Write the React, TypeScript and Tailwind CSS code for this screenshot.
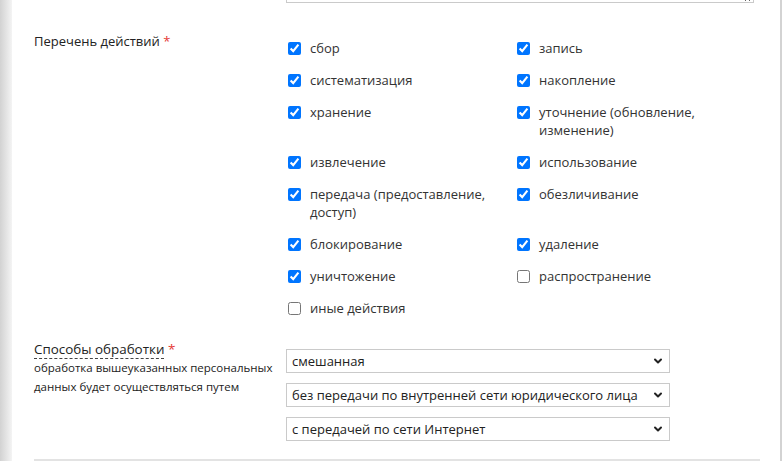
import { ChevronDown } from 'lucide-react';

type Action = { label: string; checked: boolean };

const ACTIONS: Action[] = [
  { label: 'сбор', checked: true },
  { label: 'запись', checked: true },
  { label: 'систематизация', checked: true },
  { label: 'накопление', checked: true },
  { label: 'хранение', checked: true },
  { label: 'уточнение (обновление, изменение)', checked: true },
  { label: 'извлечение', checked: true },
  { label: 'использование', checked: true },
  { label: 'передача (предоставление, доступ)', checked: true },
  { label: 'обезличивание', checked: true },
  { label: 'блокирование', checked: true },
  { label: 'удаление', checked: true },
  { label: 'уничтожение', checked: true },
  { label: 'распространение', checked: false },
  { label: 'иные действия', checked: false },
];

const METHODS = [
  ['смешанная', 'автоматизированная', 'неавтоматизированная'],
  ['без передачи по внутренней сети юридического лица', 'с передачей по внутренней сети юридического лица'],
  ['с передачей по сети Интернет', 'без передачи по сети Интернет'],
];

function Select({ options }: { options: string[] }) {
  return (
    <div className="relative w-[384px]">
      <select
        defaultValue={options[0]}
        className="block h-[24px] w-full appearance-none border border-[#cacaca] bg-white pl-[5px] pr-6 text-[13px] leading-[22px] text-[#222] outline-none"
      >
        {options.map((o) => (
          <option key={o}>{o}</option>
        ))}
      </select>
      <ChevronDown
        className="pointer-events-none absolute right-[6px] top-[6px] h-[12px] w-[12px] text-[#222]"
        strokeWidth={4}
      />
    </div>
  );
}

export default function App() {
  return (
    <div className="flex min-h-[461px] overflow-hidden bg-white font-['Open_Sans',sans-serif] text-[13px] text-[#333]">
      <div className="w-3 shrink-0 bg-gradient-to-r from-[#d2d2d2] to-[#f4f4f4]" />

      <div className="flex-1 pl-[22px]">
        {/* textarea from the section above, scrolled out of view */}
        <div className="grid grid-cols-[252px_1fr]">
          <textarea className="col-start-2 -mt-[57px] block h-[60px] w-[468px] border border-[#cacaca] bg-white" />
        </div>

        <div className="mt-[29px] grid grid-cols-[252px_1fr]">
          <p className="leading-[18px] text-[#222]">
            Перечень действий <span className="text-[#e53935]">*</span>
          </p>
          <div className="grid grid-cols-[229px_229px] gap-y-[14px] pt-[7px]">
            {ACTIONS.map((a) => (
              <label key={a.label} className="flex items-start gap-[9px] pl-[2px] leading-[18px]">
                <input type="checkbox" defaultChecked={a.checked} className="mt-[3px] h-[13px] w-[13px] shrink-0" />
                <span className="pr-6">{a.label}</span>
              </label>
            ))}
          </div>
        </div>

        <div className="mt-[23px] grid grid-cols-[252px_1fr]">
          <div>
            <p className="text-[13.4px] leading-[18px] text-[#222]">
              <span className="border-b border-dashed border-[#444]">Способы обработки</span>{' '}
              <span className="text-[#e53935]">*</span>
            </p>
            <p className="max-w-[245px] text-[11.5px] leading-[19px] text-[#222]">
              обработка вышеуказанных персональных данных будет осуществляться путем
            </p>
          </div>
          <div className="flex flex-col gap-[10px] pt-[9px]">
            {METHODS.map((opts) => (
              <Select key={opts[0]} options={opts} />
            ))}
          </div>
        </div>

        <div className="mt-[18px] h-[3px] w-[726px] bg-[#e3e3e3]" />
      </div>

      <div className="w-[2px] shrink-0 bg-[#d3d3d3]" />
      <div className="w-[2px] shrink-0" />
    </div>
  );
}
